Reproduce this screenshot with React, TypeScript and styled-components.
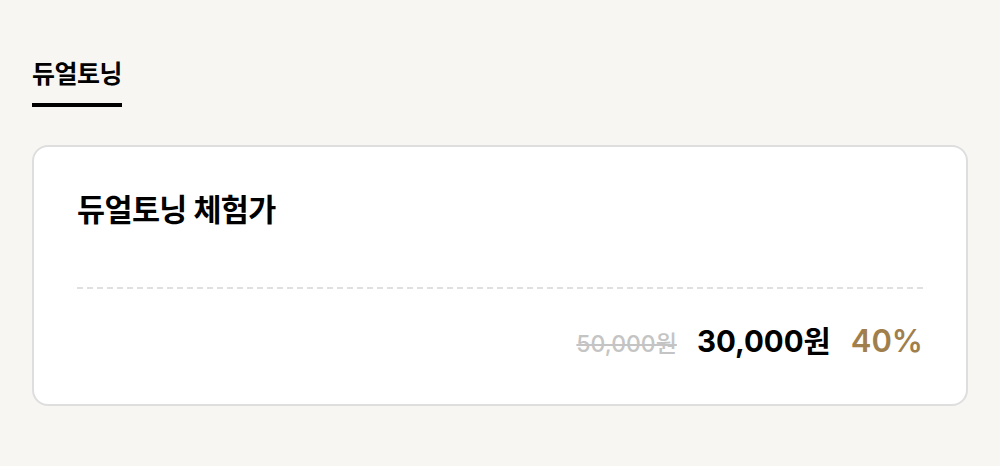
import React from "react";
import styled, { createGlobalStyle } from "styled-components";

const Global = createGlobalStyle`
  html, body { margin: 0; padding: 0; background: #f7f6f3; }
  body { font-family: Inter, "Noto Sans CJK KR", "Noto Sans", sans-serif; color: #000; }
`;

const Page = styled.div`
  padding: 56px 32px 0 32px;
  width: 936px;
`;

const Tabs = styled.div`
  display: flex;
`;

const Tab = styled.div<{ $active?: boolean }>`
  font-size: 25px;
  font-weight: 700;
  letter-spacing: -0.02em;
  line-height: 36px;
  padding-bottom: 11px;
  border-bottom: 4px solid ${(p) => (p.$active ? "#000" : "transparent")};
`;

const Card = styled.div`
  margin-top: 38px;
  background: #fff;
  border: 2px solid #dedede;
  border-radius: 16px;
  padding: 44px 43px 38px 43px;
  height: 261px;
  box-sizing: border-box;
  display: flex;
  flex-direction: column;
`;

const Title = styled.div`
  font-size: 30.5px;
  font-weight: 700;
  letter-spacing: -0.02em;
  line-height: 38px;
`;

const Divider = styled.div`
  margin-top: 58px;
  border-top: 2px dashed #e0e0e0;
`;

const PriceRow = styled.div`
  margin-top: 32px;
  display: flex;
  justify-content: flex-end;
  align-items: baseline;
  gap: 20px;
  line-height: 40px;
`;

const Original = styled.span`
  font-size: 23px;
  font-weight: 500;
  color: #c4c4c4;
  text-decoration: line-through;
`;

const Sale = styled.span`
  font-size: 29.5px;
  font-weight: 700;
  color: #000;
`;

const Discount = styled.span`
  font-size: 31px;
  font-weight: 600;
  color: #a07f4c;
`;

export default function App() {
  return (
    <>
      <Global />
      <Page>
        <Tabs>
          <Tab $active>듀얼토닝</Tab>
        </Tabs>
        <Card>
          <Title>듀얼토닝 체험가</Title>
          <Divider />
          <PriceRow>
            <Original>50,000원</Original>
            <Sale>30,000원</Sale>
            <Discount>40%</Discount>
          </PriceRow>
        </Card>
      </Page>
    </>
  );
}
